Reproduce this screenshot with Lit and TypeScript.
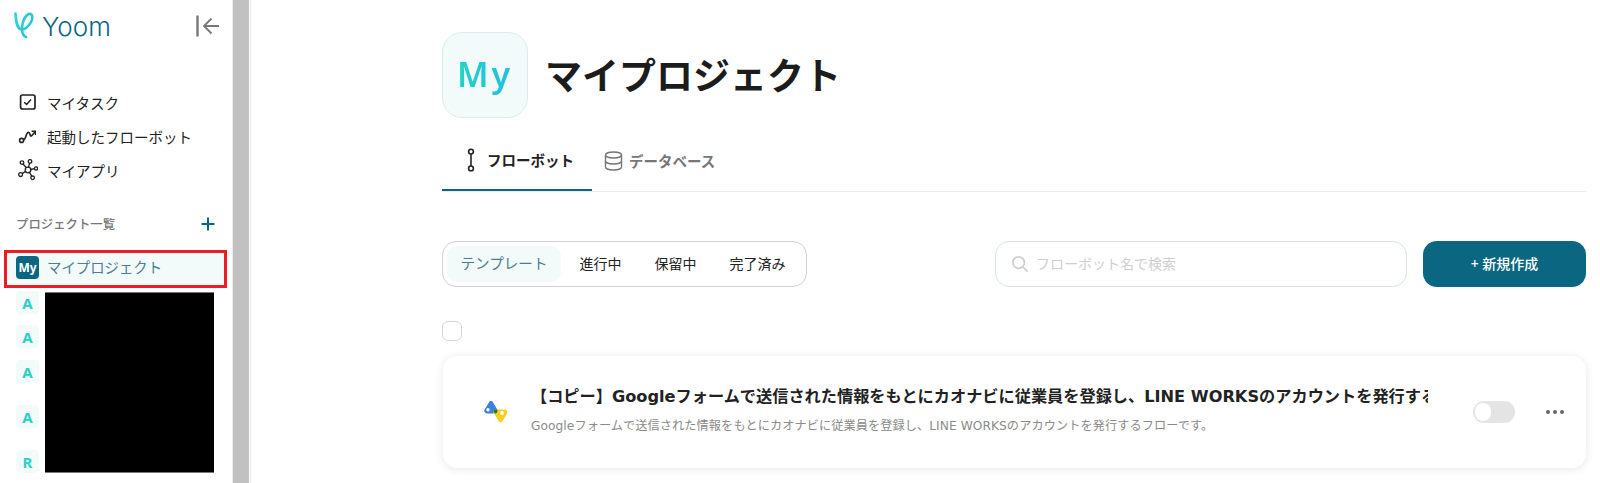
import { LitElement, css, html, svg } from 'lit';
import { customElement } from 'lit/decorators.js';

const projects = [
  { letter: 'A', gap: 0 },
  { letter: 'A', gap: 11 },
  { letter: 'A', gap: 12 },
  { letter: 'A', gap: 22 },
  { letter: 'R', gap: 22 },
];

const statuses = ['テンプレート', '進行中', '保留中', '完了済み'];

const logoMark = svg`
  <svg width="22" height="28" viewBox="0 0 22 28" fill="none">
    <defs>
      <linearGradient id="yoom" x1="0" y1="0" x2="1" y2="1">
        <stop offset="0" stop-color="#2dd4c4" />
        <stop offset="1" stop-color="#27c0e0" />
      </linearGradient>
    </defs>
    <path
      d="M2.5 1.5C3 8 3.5 17 8.5 17.5C13 18 21 9 19 3.5C17.5 -0.5 12 3 10 10C8.5 15 8 23 13 25"
      stroke="url(#yoom)"
      stroke-width="2.6"
      stroke-linecap="round"
    />
  </svg>
`;

const collapseIcon = svg`
  <svg width="24" height="24" viewBox="0 0 24 24" fill="none" stroke="#777" stroke-width="1.8">
    <path d="M1.5 1.5v21" stroke-width="2.4" />
    <path d="M23 12H8M15.5 4.5L8 12L15.5 19.5" />
  </svg>
`;

const taskIcon = svg`
  <svg width="18" height="18" viewBox="0 0 18 18" fill="none" stroke="#222">
    <rect x="2.6" y="2" width="14.4" height="14" rx="2" stroke-width="1.7" />
    <path d="M6.2 9.2L8.6 11.4L13 6.6" stroke-width="1.5" />
  </svg>
`;

const routeIcon = svg`
  <svg width="18" height="18" viewBox="0 0 18 18" fill="none" stroke="#222" stroke-width="1.6">
    <circle cx="3.6" cy="13.4" r="2" />
    <path d="M5.6 12.8C8.4 12.4 7.6 5.6 10.4 5.4C12.6 5.2 11.6 9.6 13.4 9L17.2 4.8" />
    <path d="M13.6 4.2H17.6V8" />
  </svg>
`;

const appsIcon = svg`
  <svg width="20" height="22" viewBox="0 0 20 22" fill="none" stroke="#222" stroke-width="1.3">
    <circle cx="10" cy="11" r="2.8" />
    <circle cx="4" cy="3.6" r="1.8" />
    <circle cx="12" cy="2.4" r="1.8" />
    <circle cx="18" cy="9.4" r="1.6" />
    <circle cx="2.6" cy="15.6" r="1.9" />
    <circle cx="14.6" cy="18.8" r="1.8" />
    <path d="M5 5L8.4 8.8M11.6 4.1L10.6 8.2M16.4 9.7L12.8 10.5M4.2 14.6L7.6 12.4M11.4 13.4L13.8 17.2" />
  </svg>
`;

const plusIcon = svg`
  <svg width="14" height="14" viewBox="0 0 14 14" stroke="#0b6781" stroke-width="2">
    <path d="M7 0.5v13M0.5 7h13" />
  </svg>
`;

const flowIcon = svg`
  <svg width="12" height="24" viewBox="0 0 12 24" fill="none" stroke="#222" stroke-width="1.6">
    <circle cx="6" cy="3.6" r="2.4" />
    <circle cx="6" cy="20.4" r="2.4" />
    <path d="M6 6v12" />
  </svg>
`;

const dbIcon = svg`
  <svg width="19" height="20" viewBox="0 0 19 20" fill="none" stroke="#777" stroke-width="1.4">
    <ellipse cx="9.5" cy="4" rx="8" ry="3" />
    <path d="M1.5 4v12c0 1.7 3.6 3 8 3s8-1.3 8-3V4" />
    <path d="M1.5 10c0 1.7 3.6 3 8 3s8-1.3 8-3" />
  </svg>
`;

const searchIcon = svg`
  <svg width="18" height="18" viewBox="0 0 18 18" fill="none" stroke="#cfcfcf" stroke-width="1.8">
    <circle cx="7.6" cy="7.6" r="5.8" />
    <path d="M12 12L16.4 16.6" />
  </svg>
`;

const pinsIcon = svg`
  <svg width="24" height="24" viewBox="0 0 24 24">
    <path d="M7 1C7.9 1 8.6 1.5 9 2.2L13.2 9.4C14.2 11 13 13.4 11 13.4H3C.6 13.4 -.4 11 .7 9.4L5 2.2C5.4 1.5 6.1 1 7 1Z" fill="#3d7fde" />
    <path d="M9.5 9.4H20.6C23 9.4 24.2 11.8 23 13.6L18.6 21C17.6 22.6 15.6 22.6 14.6 21L10.2 13.8C9.2 12.2 8.6 10.6 9.5 9.4Z" fill="#fbcf21" />
    <path d="M9.5 9.4H13.2C14.2 11 13 13.4 11 13.4C10.2 12.2 8.6 10.6 9.5 9.4Z" fill="#1f7a3a" />
    <circle cx="4" cy="9.8" r="1.7" fill="#fff" />
    <circle cx="18" cy="13" r="1.9" fill="#fff" />
  </svg>
`;

@customElement('app-root')
export class AppRoot extends LitElement {
  render() {
    return html`
      <aside class="sidebar">
        <div class="logo-row">
          <div class="logo">${logoMark}<span>Yoom</span></div>
          <span class="collapse">${collapseIcon}</span>
        </div>

        <nav class="nav">
          <a><span class="nav-icon">${taskIcon}</span>マイタスク</a>
          <a><span class="nav-icon">${routeIcon}</span>起動したフローボット</a>
          <a><span class="nav-icon">${appsIcon}</span>マイアプリ</a>
        </nav>

        <div class="section-head">
          <span>プロジェクト一覧</span>
          ${plusIcon}
        </div>

        <div class="current">
          <span class="my-badge">My</span>
          <span class="current-name">マイプロジェクト</span>
        </div>

        <div class="project-list">
          <div class="avatars">
            ${projects.map(
              (p) => html`<span class="avatar" style="margin-top:${p.gap}px">${p.letter}</span>`
            )}
          </div>
          <div class="redacted"></div>
        </div>
      </aside>

      <div class="scrollbar"></div>

      <main class="main">
        <header class="title-row">
          <div class="title-icon"><span>My</span></div>
          <h1>マイプロジェクト</h1>
        </header>

        <div class="tabs">
          <div class="tab active">${flowIcon}<span>フローボット</span></div>
          <div class="tab">${dbIcon}<span>データベース</span></div>
        </div>

        <div class="tools">
          <div class="segments">
            ${statuses.map(
              (s, i) => html`<span class="segment ${i === 0 ? 'on' : ''}">${s}</span>`
            )}
          </div>
          <div class="search">${searchIcon}<span>フローボット名で検索</span></div>
          <button class="create">+ 新規作成</button>
        </div>

        <div class="check"></div>

        <article class="card">
          <div class="card-icon">${pinsIcon}</div>
          <div class="card-body">
            <div class="card-title">
              【コピー】Googleフォームで送信された情報をもとにカオナビに従業員を登録し、LINE WORKSのアカウントを発行するフローです
            </div>
            <div class="card-desc">
              Googleフォームで送信された情報をもとにカオナビに従業員を登録し、LINE WORKSのアカウントを発行するフローです。
            </div>
          </div>
          <div class="toggle"><i></i></div>
          <div class="more"><i></i><i></i><i></i></div>
        </article>
      </main>
    `;
  }

  static styles = css`
    :host {
      display: flex;
      height: 483px;
      overflow: hidden;
      background: #fff;
      color: #222;
      font-family: 'Noto Sans', 'Noto Sans CJK JP', sans-serif;
      font-size: 14px;
    }

    .sidebar {
      width: 233px;
      flex: none;
      box-sizing: border-box;
    }

    .logo-row {
      height: 52px;
      display: flex;
      align-items: center;
      justify-content: space-between;
      padding: 0 13px 0 13px;
    }

    .logo {
      display: flex;
      align-items: center;
      gap: 7px;
      color: #0b6781;
      font-family: Inter, sans-serif;
      font-size: 26px;
      font-weight: 300;
    }

    .collapse {
      display: flex;
    }

    .nav {
      margin-top: 33px;
      font-size: 14.5px;
    }

    .nav a {
      height: 34px;
      display: flex;
      align-items: center;
      padding-left: 18px;
      color: #222;
    }

    .nav-icon {
      width: 29px;
      display: flex;
      align-items: center;
    }

    .section-head {
      margin-top: 25px;
      height: 24px;
      display: flex;
      align-items: center;
      justify-content: space-between;
      padding: 0 18px 0 16px;
      font-size: 12.4px;
      font-weight: 500;
      color: #777;
    }

    .current {
      margin: 14px 6px 0 4px;
      height: 38px;
      box-sizing: border-box;
      border: 3px solid #ed1c24;
      background: #f2fafa;
      display: flex;
      align-items: center;
      gap: 8px;
      padding: 0 0 3px 9px;
      font-size: 14.4px;
      color: #4a7f90;
    }

    .current-name {
      margin-bottom: 2px;
    }

    .my-badge {
      width: 23px;
      height: 23px;
      border-radius: 4px;
      background: #0b6781;
      color: #fff;
      font-size: 12px;
      font-weight: 700;
      display: flex;
      align-items: center;
      justify-content: center;
    }

    .project-list {
      display: flex;
      gap: 6px;
      padding: 3px 0 0 16px;
    }

    .avatars {
      display: flex;
      flex-direction: column;
    }

    .avatar {
      width: 23px;
      height: 23px;
      border-radius: 4px;
      background: #f2fafa;
      color: #2bcfc5;
      font-size: 15px;
      font-weight: 700;
      display: flex;
      align-items: center;
      justify-content: center;
    }

    .redacted {
      margin-top: 1px;
      width: 169px;
      height: 181px;
      box-sizing: border-box;
      background: #000;
      border-top: 1px solid #777;
      border-bottom: 1px solid #777;
    }

    .scrollbar {
      width: 16px;
      flex: none;
      background: #c1c1c1;
      border-right: 1px solid #fff;
      box-shadow: -1px 0 #ececec;
    }

    .main {
      flex: 1;
      min-width: 0;
      border-left: 1px solid #eaeaea;
      padding: 32px 14px 0 191px;
      box-sizing: border-box;
    }

    .title-row {
      display: flex;
      align-items: center;
      gap: 17px;
    }

    .title-icon {
      width: 86px;
      height: 86px;
      box-sizing: border-box;
      padding-bottom: 3px;
      border: 1px solid #dcecec;
      border-radius: 20px;
      background: #f2fafa;
      display: flex;
      align-items: center;
      justify-content: center;
      font-size: 34px;
      font-weight: 600;
      letter-spacing: 3px;
    }

    .title-icon span {
      background: linear-gradient(100deg, #20d4c4, #22bfe2);
      -webkit-background-clip: text;
      background-clip: text;
      color: transparent;
    }

    h1 {
      margin: 0;
      font-size: 37px;
      font-weight: 700;
      line-height: 1;
      color: #1c1c1c;
    }

    .tabs {
      margin-top: 18px;
      height: 55px;
      display: flex;
      border-bottom: 1px solid #ececec;
      font-size: 14.5px;
    }

    .tab {
      display: flex;
      align-items: center;
      gap: 6px;
      height: 55px;
      box-sizing: border-box;
      padding-bottom: 6px;
      color: #777;
      font-weight: 700;
    }

    .tab.active {
      width: 150px;
      padding-left: 23px;
      gap: 10px;
      color: #222;
      border-bottom: 2px solid #0b6781;
      margin-right: 12px;
    }

    .tools {
      margin-top: 49px;
      display: flex;
      align-items: stretch;
      height: 46px;
    }

    .segments {
      width: 365px;
      box-sizing: border-box;
      border: 1px solid #d0d0d0;
      border-radius: 14px;
      padding: 4px;
      display: flex;
      align-items: stretch;
    }

    .segment {
      display: flex;
      align-items: center;
      justify-content: center;
      padding: 0 16.5px 3px;
      border-radius: 10px;
      color: #222;
      white-space: nowrap;
    }

    .segment.on {
      width: 114px;
      box-sizing: border-box;
      padding: 0 0 3px;
      margin-right: 2px;
      background: #f2fafa;
      font-size: 14.6px;
      color: #4a7f90;
    }

    .search {
      margin-left: 188px;
      width: 412px;
      box-sizing: border-box;
      border: 1px solid #dde3e5;
      border-radius: 14px;
      display: flex;
      align-items: center;
      gap: 7px;
      padding-left: 15px;
      color: #cfcfcf;
    }

    .search span {
      margin-bottom: 3px;
    }

    .create {
      margin-left: 16px;
      flex: 1;
      border: 0;
      border-radius: 14px;
      background: #0b6781;
      color: #fff;
      font: inherit;
      font-size: 14px;
      font-weight: 500;
      padding: 0 0 3px;
    }

    .check {
      margin-top: 34px;
      width: 20px;
      height: 20px;
      box-sizing: border-box;
      border: 1px solid #d4d4d4;
      border-radius: 6px;
    }

    .card {
      margin: 15px 0 0 1px;
      height: 112px;
      border-radius: 14px;
      background: #fff;
      box-shadow: 0 1px 8px rgba(0, 0, 0, 0.1);
      display: flex;
      align-items: center;
      font-family: 'DejaVu Sans', 'Noto Sans CJK JP', sans-serif;
    }

    .card-icon {
      width: 88px;
      flex: none;
      display: flex;
      padding-left: 41px;
      box-sizing: border-box;
    }

    .card-body {
      width: 897px;
      flex: none;
      overflow: hidden;
      white-space: nowrap;
      padding-bottom: 5px;
    }

    .card-title {
      font-size: 16.2px;
      font-weight: 700;
      line-height: 24px;
      color: #222;
      overflow: hidden;
    }

    .card-desc {
      margin-top: 7px;
      font-size: 12.2px;
      letter-spacing: 0.07px;
      color: #8a8a8a;
    }

    .toggle {
      margin-left: 45px;
      width: 42px;
      height: 22px;
      border-radius: 11px;
      background: #e4e4e4;
      padding: 2px;
      box-sizing: border-box;
    }

    .toggle i {
      display: block;
      width: 16px;
      height: 18px;
      border-radius: 9px;
      background: #fff;
    }

    .more {
      margin-left: 31px;
      display: flex;
      gap: 3px;
    }

    .more i {
      width: 4px;
      height: 4px;
      border-radius: 50%;
      background: #666;
    }
  `;
}

declare global {
  interface HTMLElementTagNameMap {
    'app-root': AppRoot;
  }
}
